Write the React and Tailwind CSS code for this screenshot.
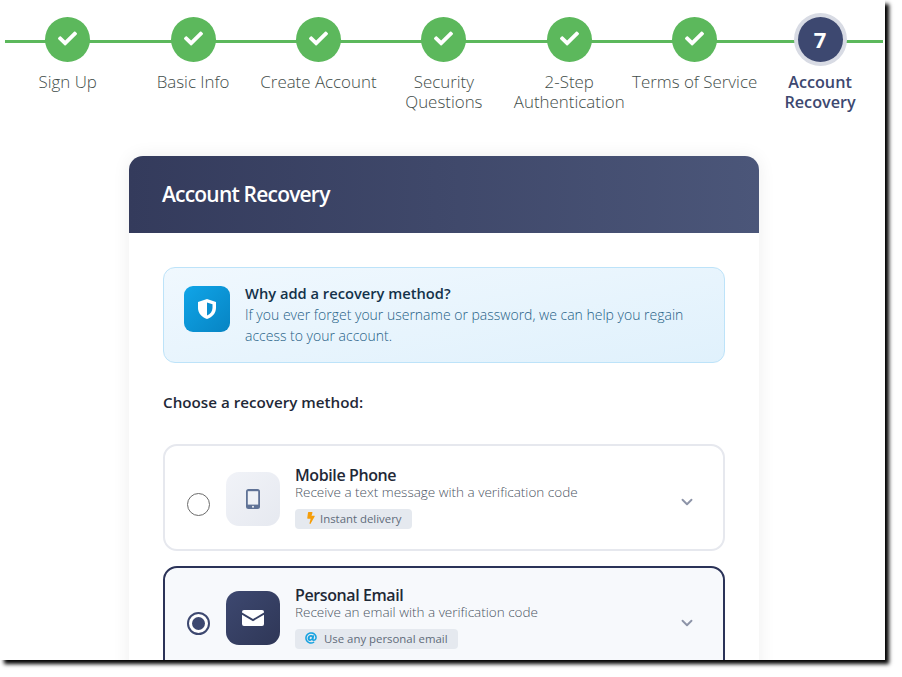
import React from 'react';
import { ChevronDown } from 'lucide-react';
import { FaAt, FaBolt, FaCheck } from 'react-icons/fa';

const steps = [
  { label: ['Sign Up'] },
  { label: ['Basic Info'] },
  { label: ['Create Account'] },
  { label: ['Security', 'Questions'] },
  { label: ['2-Step', 'Authentication'] },
  { label: ['Terms of Service'] },
  { label: ['Account', 'Recovery'], current: true },
];

const Step = ({ step, number }) => (
  <div className="relative z-10 flex w-[125.4px] shrink-0 flex-col items-center">
    {step.current ? (
      <div className="flex h-[45px] w-[45px] items-center justify-center rounded-full bg-[#3d4870] text-[22px] font-bold text-white shadow-[0_0_0_4px_#d8dbe4]">
        {number}
      </div>
    ) : (
      <div className="flex h-[45px] w-[45px] items-center justify-center rounded-full bg-[#5cb85c] pb-[3px]">
        <FaCheck size={19} className="text-white" />
      </div>
    )}
    <div
      className={`mt-[10px] whitespace-nowrap text-center leading-[20px] ${
        step.current ? 'text-[16.2px] font-semibold text-[#3d4870]' : 'text-[16.9px] font-light text-[#3f4d49]'
      }`}
    >
      {step.label.map(line => (
        <div key={line}>{line}</div>
      ))}
    </div>
  </div>
);

const PhoneIcon = () => (
  <svg width="14" height="20" viewBox="0 0 14 20">
    <rect x="0" y="0" width="14" height="20" rx="2.5" fill="#5f7296" />
    <rect x="1.8" y="2.2" width="10.4" height="13.4" fill="#eef1f6" />
    <circle cx="7" cy="17.8" r="1" fill="#eef1f6" />
  </svg>
);

const MailIcon = () => (
  <svg width="22" height="16" viewBox="0 0 22 16">
    <path d="M2 0h18a2 2 0 0 1 2 2v.6L11 9 0 2.6V2a2 2 0 0 1 2-2z" fill="#fff" />
    <path d="M0 4.8 11 11.2 22 4.8V14a2 2 0 0 1-2 2H2a2 2 0 0 1-2-2z" fill="#fff" />
  </svg>
);

const MethodCard = ({ title, desc, badge, badgeIcon, icon, selected }) => (
  <div
    className={`flex shrink-0 items-start rounded-[14px] border-2 pl-[22px] pr-[27px] ${
      selected ? 'h-[120px] border-[#2b3358] bg-[#f7f9fc]' : 'h-[107px] border-[#e6e8ee] bg-white'
    }`}
  >
    {selected ? (
      <div className="mt-[44px] flex h-[23px] w-[23px] shrink-0 items-center justify-center rounded-full border-2 border-[#3d4870] bg-white">
        <div className="h-[13px] w-[13px] rounded-full bg-[#3d4870]" />
      </div>
    ) : (
      <div className="mt-[47px] h-[23px] w-[23px] shrink-0 rounded-full border-[1.5px] border-[#6b6b6b] bg-white" />
    )}
    <div
      className={`ml-[16px] flex h-[54px] w-[54px] shrink-0 items-center justify-center rounded-[13px] ${
        selected
          ? 'mt-[23px] bg-gradient-to-br from-[#3d4870] to-[#2f3757]'
          : 'mt-[26px] bg-gradient-to-br from-[#f1f3f8] to-[#e6e9f0]'
      }`}
    >
      {icon}
    </div>
    <div className={`ml-[15px] flex-1 ${selected ? 'mt-[17px]' : 'mt-[19px]'}`}>
      <div className="text-[16px] font-semibold leading-[20px] tracking-[-0.4px] text-[#1f2937]">{title}</div>
      <div className="text-[13.5px] font-light leading-[15px] text-[#4b5563]">{desc}</div>
      <div className="mt-[9px] inline-flex h-[20px] items-center rounded-[4px] bg-[#e5e9ef] pl-[10px] pr-[10px] text-[11.4px] text-[#5f6b7a]">
        {badgeIcon}
        {badge}
      </div>
    </div>
    <ChevronDown
      size={18}
      strokeWidth={2.5}
      className={`text-[#8d94a8] ${selected ? 'mt-[46px]' : 'mt-[47px]'}`}
    />
  </div>
);

const App = () => (
  <div className="h-[677px] w-[902px] overflow-hidden bg-white font-['Open_Sans',sans-serif]">
    <div className="flex h-[660px] w-[885px] flex-col overflow-hidden bg-white shadow-[4px_4px_4px_#000]">
      {/* Stepper */}
      <div className="relative flex shrink-0 px-[5px] pt-[17px]">
        <div className="absolute left-[5px] right-[2px] top-[40px] h-[3px] bg-[#5cb85c]" />
        {steps.map((step, i) => (
          <Step key={step.label[0]} step={step} number={i + 1} />
        ))}
      </div>

      {/* Card */}
      <div className="ml-[129px] mt-[44px] w-[630px] flex-1 rounded-t-[14px] bg-white shadow-[0_0_18px_rgba(0,0,0,0.07)]">
        <div className="flex h-[77px] items-center rounded-t-[14px] bg-gradient-to-r from-[#343b5c] to-[#4b5679] px-[33px] text-[21px] font-semibold tracking-[-0.8px] text-white">
          Account Recovery
        </div>

        <div className="flex flex-col px-[34px] pt-[34px]">
          {/* Info box */}
          <div className="flex h-[96px] items-start rounded-[12px] border border-[#bde3f9] bg-gradient-to-br from-[#f0f8fe] to-[#e0f1fc] pl-[20px] pt-[15px]">
            <div className="mt-[3px] flex h-[46px] w-[46px] shrink-0 items-center justify-center rounded-[9px] bg-gradient-to-br from-[#10a5e8] to-[#0784c3]">
              <svg width="18" height="20" viewBox="0 0 18 20">
                <path d="M9 0 18 3v6c0 5-3.6 9-9 11-5.400-2-9-6-9-11V3z" fill="#fff" />
                <path d="M9 3.500V16.500c3.300-1.600 5.500-4.300 5.500-7.600V5.300z" fill="#0a8fd0" />
              </svg>
            </div>
            <div className="ml-[15px]">
              <div className="text-[14.7px] font-semibold leading-[21px] text-[#14324a]">Why add a recovery method?</div>
              <div className="w-[460px] text-[14px] font-light leading-[21px] text-[#1f5f86]">
                If you ever forget your username or password, we can help you regain access to your account.
              </div>
            </div>
          </div>

          <div className="mb-[31px] mt-[28px] text-[15.2px] font-semibold leading-[22px] text-[#1f2937]">
            Choose a recovery method:
          </div>

          <div className="flex flex-col gap-[15px]">
            <MethodCard
              title="Mobile Phone"
              desc="Receive a text message with a verification code"
              badge="Instant delivery"
              badgeIcon={<FaBolt size={12} className="mb-[3px] mr-[3px] text-[#f59e0b]" />}
              icon={<PhoneIcon />}
            />
            <MethodCard
              selected
              title="Personal Email"
              desc="Receive an email with a verification code"
              badge="Use any personal email"
              badgeIcon={<FaAt size={12} className="mb-[3px] mr-[7px] text-[#17a2e0]" />}
              icon={<MailIcon />}
            />
          </div>
        </div>
      </div>
    </div>
  </div>
);

export default App;
